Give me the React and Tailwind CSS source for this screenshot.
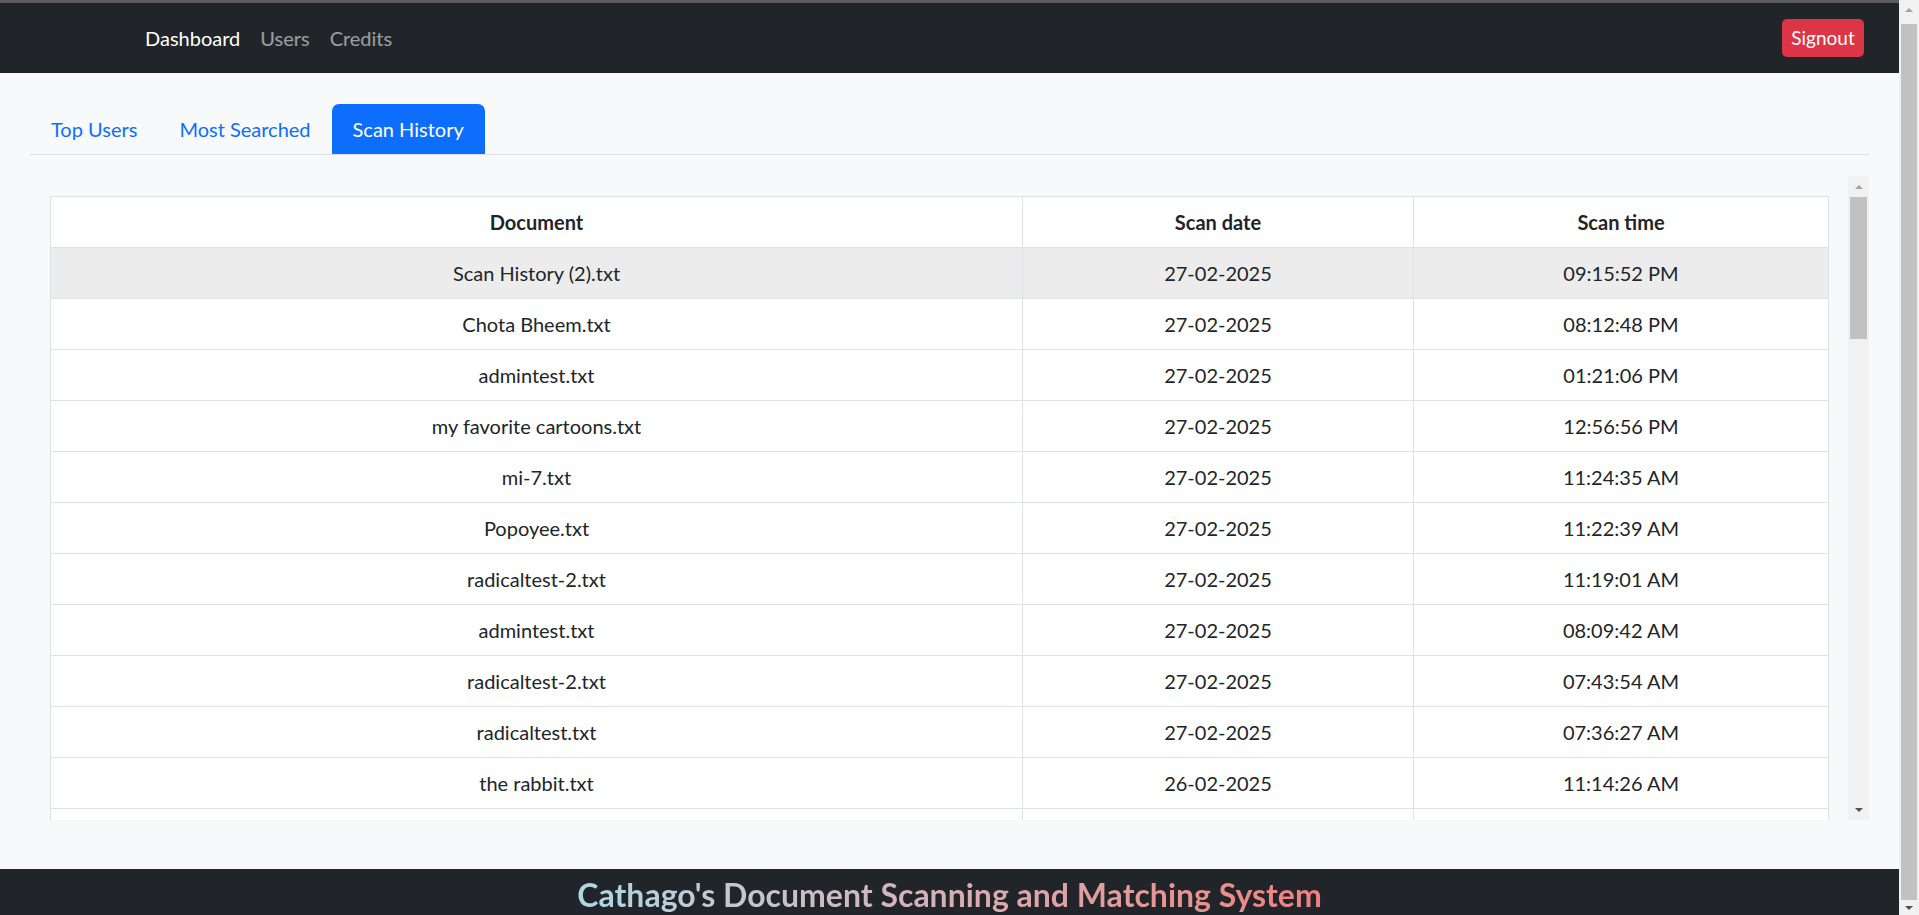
import { useState } from "react"

const scans = [
    { doc: "Scan History (2).txt", date: "27-02-2025", time: "09:15:52 PM" },
    { doc: "Chota Bheem.txt", date: "27-02-2025", time: "08:12:48 PM" },
    { doc: "admintest.txt", date: "27-02-2025", time: "01:21:06 PM" },
    { doc: "my favorite cartoons.txt", date: "27-02-2025", time: "12:56:56 PM" },
    { doc: "mi-7.txt", date: "27-02-2025", time: "11:24:35 AM" },
    { doc: "Popoyee.txt", date: "27-02-2025", time: "11:22:39 AM" },
    { doc: "radicaltest-2.txt", date: "27-02-2025", time: "11:19:01 AM" },
    { doc: "admintest.txt", date: "27-02-2025", time: "08:09:42 AM" },
    { doc: "radicaltest-2.txt", date: "27-02-2025", time: "07:43:54 AM" },
    { doc: "radicaltest.txt", date: "27-02-2025", time: "07:36:27 AM" },
    { doc: "the rabbit.txt", date: "26-02-2025", time: "11:14:26 AM" },
    { doc: "Tom and Jerry.txt", date: "26-02-2025", time: "10:52:11 AM" },
    { doc: "admintest.txt", date: "26-02-2025", time: "10:31:08 AM" },
    { doc: "mi-6.txt", date: "26-02-2025", time: "09:47:30 AM" },
    { doc: "doraemon.txt", date: "25-02-2025", time: "08:20:15 PM" },
    { doc: "radicaltest.txt", date: "25-02-2025", time: "06:05:44 PM" },
    { doc: "shinchan.txt", date: "25-02-2025", time: "04:18:02 PM" },
    { doc: "my favorite cartoons.txt", date: "25-02-2025", time: "02:41:39 PM" },
    { doc: "mi-5.txt", date: "25-02-2025", time: "11:09:57 AM" },
    { doc: "Popoyee.txt", date: "24-02-2025", time: "09:33:21 PM" },
    { doc: "the rabbit.txt", date: "24-02-2025", time: "07:12:48 PM" },
    { doc: "admintest.txt", date: "24-02-2025", time: "05:56:10 PM" },
    { doc: "Chota Bheem.txt", date: "24-02-2025", time: "03:27:36 PM" },
    { doc: "test.txt", date: "24-02-2025", time: "01:14:05 PM" },
    { doc: "sample.txt", date: "23-02-2025", time: "10:45:19 PM" },
    { doc: "radicaltest-2.txt", date: "23-02-2025", time: "08:02:53 PM" },
    { doc: "mi-4.txt", date: "23-02-2025", time: "06:38:27 PM" },
    { doc: "notes.txt", date: "23-02-2025", time: "04:11:44 PM" },
    { doc: "doraemon.txt", date: "23-02-2025", time: "12:29:08 PM" },
    { doc: "shinchan.txt", date: "22-02-2025", time: "09:53:16 PM" },
    { doc: "Tom and Jerry.txt", date: "22-02-2025", time: "07:40:02 PM" },
    { doc: "admintest.txt", date: "22-02-2025", time: "05:18:37 PM" },
    { doc: "sample.txt", date: "22-02-2025", time: "02:06:59 PM" },
    { doc: "test.txt", date: "22-02-2025", time: "11:47:23 AM" },
    { doc: "mi-3.txt", date: "21-02-2025", time: "08:35:41 PM" },
    { doc: "radicaltest.txt", date: "21-02-2025", time: "06:22:14 PM" },
    { doc: "the rabbit.txt", date: "21-02-2025", time: "03:59:50 PM" },
    { doc: "Popoyee.txt", date: "21-02-2025", time: "01:08:32 PM" },
    { doc: "notes.txt", date: "20-02-2025", time: "10:26:47 PM" },
    { doc: "Chota Bheem.txt", date: "20-02-2025", time: "07:51:05 PM" },
    { doc: "admintest.txt", date: "20-02-2025", time: "04:44:18 PM" },
    { doc: "my favorite cartoons.txt", date: "20-02-2025", time: "12:15:29 PM" },
    { doc: "mi-2.txt", date: "19-02-2025", time: "09:02:36 PM" },
    { doc: "sample.txt", date: "19-02-2025", time: "06:49:11 PM" },
    { doc: "test.txt", date: "19-02-2025", time: "03:33:58 PM" },
    { doc: "doraemon.txt", date: "19-02-2025", time: "11:20:40 AM" },
    { doc: "mi-1.txt", date: "18-02-2025", time: "08:57:22 PM" },
    { doc: "first upload.txt", date: "18-02-2025", time: "05:14:03 PM" },
]

const tabs = ["Top Users", "Most Searched", "Scan History"]

// headless chrome hides real scrollbars, so draw the classic ones
function ScrollRail({ width, topGap, thumbTop, thumbHeight, bottomGap }) {
    return (
        <div className={"shrink-0 flex flex-col items-center bg-[#f1f1f1] " + width}>
            <div className={"w-full flex justify-center items-center " + topGap}>
                <div className="w-0 h-0 border-x-[4px] border-x-transparent border-b-[4px] border-b-[#a3a3a3]" />
            </div>
            <div className={"w-full flex-1 flex flex-col px-[2px] " + thumbTop}>
                <div className={"w-full bg-[#c1c1c1] " + thumbHeight} />
            </div>
            <div className={"w-full flex justify-center items-center " + bottomGap}>
                <div className="w-0 h-0 border-x-[4px] border-x-transparent border-t-[4px] border-t-[#505050]" />
            </div>
        </div>
    )
}

export default function App() {
    const [tab, setTab] = useState("Scan History")

    return (
        <div className="h-screen flex bg-[#f8f9fa] text-[#212529] text-[20px] leading-[30px] font-['Segoe_UI','Lato','Noto_Sans',sans-serif]">
            <div className="flex-1 min-w-0 overflow-y-auto">
                <div className="min-h-[940px] flex flex-col">
                    <nav className="h-[73px] shrink-0 bg-[#212529] border-t-[3px] border-[#5c5c5c] flex items-center justify-between pl-[135px] pr-[35px]">
                        <div className="flex">
                            <a className="px-[10px] text-white">Dashboard</a>
                            <a className="px-[10px] text-white/55">Users</a>
                            <a className="px-[10px] text-white/55">Credits</a>
                        </div>
                        <button className="h-[38px] w-[82px] rounded-[5px] bg-[#dc3545] text-white text-[19px] leading-[26px]">Signout</button>
                    </nav>

                    <main className="flex-1 px-[30px] pt-[31px]">
                        <div className="flex border-b border-[#dee2e6]">
                            {tabs.map((t) => (
                                <button
                                    key={t}
                                    onClick={() => setTab(t)}
                                    className={t === tab
                                        ? "px-[21px] py-[10px] rounded-t-[7px] bg-[#0d6efd] text-white"
                                        : "px-[21px] py-[10px] rounded-t-[7px] text-[#0d6efd]"}
                                >
                                    {t}
                                </button>
                            ))}
                        </div>

                        <div className="mt-[21px] h-[644px] flex">
                            <div className="flex-1 min-w-0 overflow-y-auto pl-[20px] pr-[19px] pt-[20px] pb-[20px]">
                                <table className="w-full border-collapse border border-[#dee2e6] bg-white text-center">
                                    <thead>
                                        <tr>
                                            <th className="w-[972px] border border-[#dee2e6] py-[10px] font-bold">Document</th>
                                            <th className="w-[391px] border border-[#dee2e6] py-[10px] font-bold">Scan date</th>
                                            <th className="border border-[#dee2e6] py-[10px] font-bold">Scan time</th>
                                        </tr>
                                    </thead>
                                    <tbody>
                                        {scans.map((s, i) => (
                                            <tr key={i} className={i === 0 ? "bg-[#ececec]" : "hover:bg-[#ececec]"}>
                                                <td className="border border-[#dee2e6] py-[10px]">{s.doc}</td>
                                                <td className="border border-[#dee2e6] py-[10px]">{s.date}</td>
                                                <td className="border border-[#dee2e6] py-[10px]">{s.time}</td>
                                            </tr>
                                        ))}
                                    </tbody>
                                </table>
                            </div>
                            <ScrollRail width="w-[21px]" topGap="h-[21px]" thumbTop="" thumbHeight="h-[142px]" bottomGap="h-[21px]" />
                        </div>
                    </main>

                    <footer className="mt-[49px] bg-[#212529] pt-[5px] pb-[24px] text-center">
                        <span className="inline-block bg-linear-to-r from-[#add8e6] to-[#f08080] bg-clip-text text-transparent text-[32px] leading-[42px] font-bold">
                            Cathago's Document Scanning and Matching System
                        </span>
                    </footer>
                </div>
            </div>
            <ScrollRail width="w-[20px]" topGap="h-[20px]" thumbTop="pt-[4px]" thumbHeight="h-full" bottomGap="h-[15px]" />
        </div>
    )
}
